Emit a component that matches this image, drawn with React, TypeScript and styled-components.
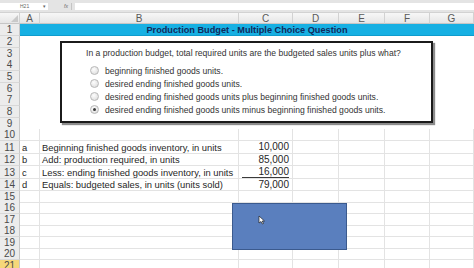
import styled, { createGlobalStyle } from "styled-components";

const GlobalStyle = createGlobalStyle`
  html, body {
    margin: 0;
    padding: 0;
    background: #fff;
    overflow: hidden;
  }
  body {
    font-family: "Liberation Sans", Arial, sans-serif;
  }
`;

const COLS = "20px 20px 199px 54px 46px 46px 45px 1fr";
const LETTERS = ["A", "B", "C", "D", "E", "F", "G"];
// row heights for rows 1..21, measured from the capture
const HEIGHTS = [12, 12, 11, 12, 12, 11, 12, 12, 11, 12, 13, 12, 13, 12, 11, 12, 11, 12, 11, 12, 12];

const data: Record<number, { tag: string; label: string; value: string; under?: boolean }> = {
  11: { tag: "a", label: "Beginning finished goods inventory, in units", value: "10,000" },
  12: { tag: "b", label: "Add: production required, in units", value: "85,000" },
  13: { tag: "c", label: "Less: ending finished goods inventory, in units", value: "16,000", under: true },
  14: { tag: "d", label: "Equals: budgeted sales, in units (units sold)", value: "79,000" },
};

const options = [
  "beginning finished goods units.",
  "desired ending finished goods units.",
  "desired ending finished goods units plus beginning finished goods units.",
  "desired ending finished goods units minus beginning finished goods units.",
];

const Page = styled.div`
  position: relative;
  width: 474px;
  height: 268px;
  overflow: hidden;
  background: #fff;
`;

const TopBar = styled.div`
  height: 13px;
  box-sizing: border-box;
  padding-top: 3px;
  background: #e4e4e4;
  border-bottom: 1px solid #d2d2d2;
`;

const FormulaRow = styled.div`
  display: flex;
  height: 7px;
  font-size: 5px;
  line-height: 7px;
  color: #666;
`;

const NameBox = styled.div`
  width: 48px;
  box-sizing: border-box;
  padding-left: 20px;
  padding-right: 2px;
  background: #fff;
  display: flex;
  justify-content: space-between;
`;

const FxZone = styled.div`
  width: 24px;
  display: flex;
  align-items: center;
  justify-content: flex-end;
  padding-right: 3px;
  box-sizing: border-box;
  font-style: italic;
  border-right: 1px solid #c4c4c4;
`;

const FormulaInput = styled.div`
  flex: 1;
  background: #fff;
  margin-left: 3px;
`;

const Row = styled.div<{ $h: number }>`
  display: grid;
  grid-template-columns: ${COLS};
  height: ${(p) => p.$h}px;
`;

const ColHead = styled.div`
  background: linear-gradient(#f7f7f7, #e6e6e6);
  border-right: 1px solid #d2d2d2;
  border-bottom: 1px solid #c6c6c6;
  font-size: 10px;
  line-height: 11px;
  color: #5a5a5a;
  text-align: center;
  position: relative;
  overflow: hidden;
`;

const CornerMark = styled.div`
  position: absolute;
  right: 1px;
  bottom: 1px;
  width: 0;
  height: 0;
  border-left: 7px solid transparent;
  border-bottom: 7px solid #c9c9c9;
`;

const RowNum = styled.div<{ $active?: boolean }>`
  background: ${(p) => (p.$active ? "#f6d77a" : "#ececec")};
  border-right: 1px solid #c8c8c8;
  border-bottom: 1px solid #d8d8d8;
  font-size: 10px;
  color: #4a4a4a;
  display: flex;
  align-items: ${(p) => (p.$active ? "flex-start" : "center")};
  justify-content: center;
  box-sizing: border-box;
  line-height: 11px;
`;

const Cell = styled.div<{ $lines?: boolean; $right?: boolean }>`
  border-right: 1px solid ${(p) => (p.$lines ? "#e3e3e3" : "transparent")};
  border-bottom: 1px solid ${(p) => (p.$lines ? "#e3e3e3" : "transparent")};
  font-size: 9.4px;
  color: #262626;
  display: flex;
  align-items: center;
  justify-content: ${(p) => (p.$right ? "flex-end" : "flex-start")};
  padding-left: 2px;
  box-sizing: border-box;
  white-space: nowrap;
  overflow: hidden;
`;

const ValueBox = styled.span<{ $under?: boolean }>`
  flex: 1;
  margin: 0 3px 0 1px;
  text-align: right;
  font-size: 10px;
  line-height: 11px;
  border-bottom: 1px solid ${(p) => (p.$under ? "#3a3a3a" : "transparent")};
`;

const TitleCell = styled.div`
  grid-column: 2 / -1;
  background: #17b0e3;
  color: #112a5c;
  font-weight: bold;
  font-size: 9.2px;
  display: flex;
  align-items: center;
  justify-content: center;
  border-bottom: 1px solid #0f9ccd;
`;

const QuestionBox = styled.div`
  position: absolute;
  left: 60px;
  top: 41px;
  width: 373px;
  height: 82px;
  box-sizing: border-box;
  background: #fff;
  border: 2px solid #1b1b1b;
  box-shadow: 2px 2px 1px #8c8c8c;
  padding: 4px 0 0 24px;
  font-size: 8.6px;
  color: #333;
`;

const Question = styled.div`
  height: 13px;
  line-height: 13px;
`;

const OptionList = styled.div`
  margin-top: 4px;
  padding-left: 4px;
  display: flex;
  flex-direction: column;
`;

const Option = styled.div`
  display: flex;
  align-items: center;
  height: 13px;
  gap: 6px;
`;

const Radio = styled.span<{ $on?: boolean }>`
  width: 7px;
  height: 7px;
  border-radius: 50%;
  border: 1px solid #b8b8b8;
  background: radial-gradient(circle at 40% 35%, #fdfdfd, #d8d8d8);
  display: flex;
  align-items: center;
  justify-content: center;
  &::after {
    content: "";
    width: 3px;
    height: 3px;
    border-radius: 50%;
    background: ${(p) => (p.$on ? "#3a3a3a" : "transparent")};
  }
`;

const Shape = styled.div`
  position: absolute;
  left: 232px;
  top: 203px;
  width: 115px;
  height: 47px;
  box-sizing: border-box;
  background: #5a7fbe;
  border: 1.5px solid #3b5a8e;
`;

const Cursor = styled.svg`
  position: absolute;
  left: 25px;
  top: 11px;
`;

export default function App() {
  return (
    <Page>
      <GlobalStyle />
      <TopBar>
        <FormulaRow>
          <NameBox>
            <span>H21</span>
            <span>▾</span>
          </NameBox>
          <FxZone>fx</FxZone>
          <FormulaInput />
        </FormulaRow>
      </TopBar>
      <Row $h={11}>
        <ColHead>
          <CornerMark />
        </ColHead>
        {LETTERS.map((l) => (
          <ColHead key={l}>{l}</ColHead>
        ))}
      </Row>
      {HEIGHTS.map((h, i) => {
        const n = i + 1;
        if (n === 1) {
          return (
            <Row key={n} $h={h}>
              <RowNum>{n}</RowNum>
              <TitleCell>Production Budget - Multiple Choice Question</TitleCell>
            </Row>
          );
        }
        const lines = n >= 10;
        const d = data[n];
        return (
          <Row key={n} $h={h}>
            <RowNum $active={n === 21}>{n}</RowNum>
            <Cell $lines={lines}>{d?.tag}</Cell>
            <Cell $lines={lines}>{d?.label}</Cell>
            <Cell $lines={lines} $right>
              {d && <ValueBox $under={d.under}>{d.value}</ValueBox>}
            </Cell>
            <Cell $lines={lines} />
            <Cell $lines={lines} />
            <Cell $lines={lines} />
            <Cell $lines={lines} />
          </Row>
        );
      })}
      <QuestionBox>
        <Question>
          In a production budget, total required units are the budgeted sales units plus what?
        </Question>
        <OptionList>
          {options.map((o, i) => (
            <Option key={o}>
              <Radio $on={i === 3} />
              <span>{o}</span>
            </Option>
          ))}
        </OptionList>
      </QuestionBox>
      <Shape>
        <Cursor width="8" height="10" viewBox="0 0 8 10">
          <path d="M1 1 L1 8 L3 6.5 L4.5 9 L5.5 8.5 L4.2 6 L6.5 6 Z" fill="#fff" stroke="#222" strokeWidth="0.7" />
        </Cursor>
      </Shape>
    </Page>
  );
}
